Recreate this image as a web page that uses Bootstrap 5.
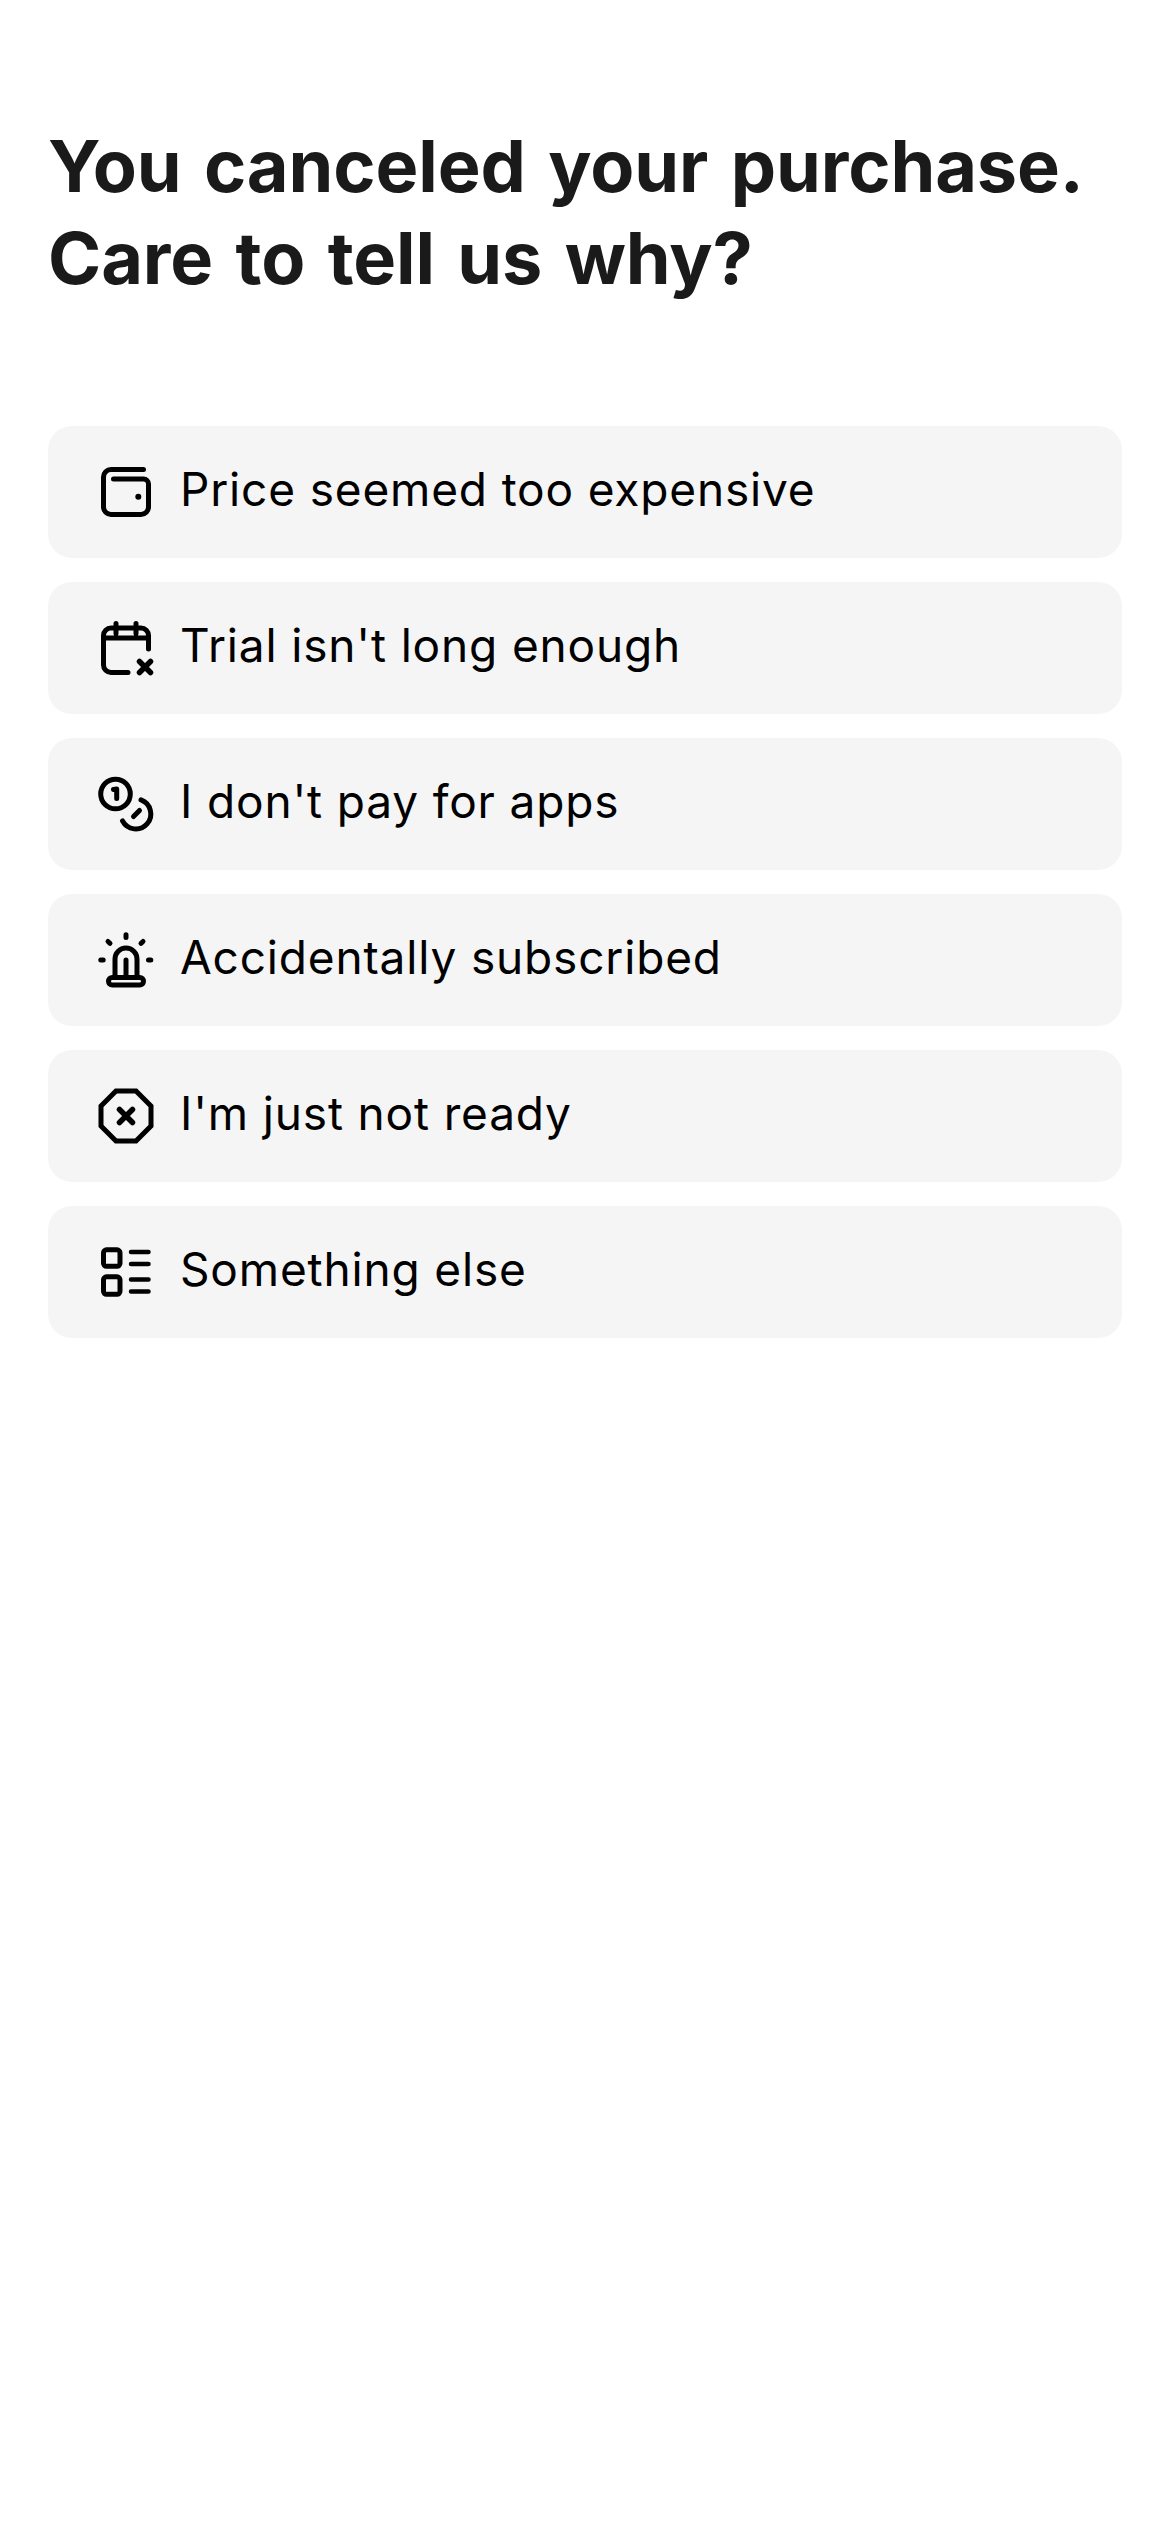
<!DOCTYPE html>
<html lang="en">
<head>
    <meta charset="UTF-8">
    <meta name="viewport" content="width=device-width, initial-scale=1.0">
    <title>Cancel survey</title>
    <link href="https://cdn.jsdelivr.net/npm/bootstrap@5.3.3/dist/css/bootstrap.min.css" rel="stylesheet">
    <style>
        body {
            font-family: Inter, "Liberation Sans", sans-serif;
            background-color: #fff;
        }
        .survey-page {
            padding: 120px 48px 0;
        }
        .survey-title {
            font-size: 72px;
            font-weight: 700;
            line-height: 92px;
            letter-spacing: -0.1px;
            word-spacing: 5.5px;
            color: #1a1a1a;
            margin-bottom: 122px;
        }
        .reason-list {
            gap: 24px;
        }
        .reason-item {
            height: 132px;
            padding: 0 48px;
            gap: 24px;
            background-color: #f5f5f5;
            border: 0;
            border-radius: 24px;
            font-size: 46px;
            color: #000;
            letter-spacing: 0.84px;
        }
        .reason-label {
            padding-bottom: 6px;
        }
        .reason-icon {
            width: 60px;
            height: 60px;
            flex-shrink: 0;
            fill: none;
            stroke: #000;
            stroke-width: 5;
            stroke-linecap: round;
            stroke-linejoin: round;
        }
        .icon-dot {
            fill: #000;
            stroke: none;
        }
    </style>
</head>
<body>
<div class="survey-page">
    <h1 class="survey-title">You canceled your purchase.<br>Care to tell us why?</h1>

    <!-- reasons -->
    <div class="reason-list d-flex flex-column">
        <button type="button" class="reason-item d-flex align-items-center w-100 text-start">
            <svg class="reason-icon" viewBox="0 0 60 60">
                <path d="M47.5 7.5H15A7.5 7.5 0 0 0 7.5 15V45A7.5 7.5 0 0 0 15 52.5H45A7.5 7.5 0 0 0 52.5 45V22A5 5 0 0 0 47.5 17H17.5"/>
                <circle class="icon-dot" cx="42.3" cy="34.7" r="3"/>
            </svg>
            <span class="reason-label">Price seemed too expensive</span>
        </button>
        <button type="button" class="reason-item d-flex align-items-center w-100 text-start">
            <svg class="reason-icon" viewBox="0 0 60 60">
                <path d="M32 54.5H15A7.5 7.5 0 0 1 7.5 47V17.5A7.5 7.5 0 0 1 15 10H45A7.5 7.5 0 0 1 52.5 17.5V31"/>
                <path d="M7.5 20H52.5M20 5.5V15.5M40 5.5V15.5"/>
                <path stroke-width="5.5" d="M43.5 43.5L54.5 54.5M54.5 43.5L43.5 54.5"/>
            </svg>
            <span class="reason-label">Trial isn't long enough</span>
        </button>
        <button type="button" class="reason-item d-flex align-items-center w-100 text-start">
            <svg class="reason-icon" viewBox="0 0 60 60">
                <circle cx="19.5" cy="20" r="14.8"/>
                <path d="M17.5 15.5L20.7 15V24.5"/>
                <path d="M45 25.9A15 15 0 1 1 26.5 46.9"/>
                <path d="M43.5 36.5L37.5 42.5"/>
            </svg>
            <span class="reason-label">I don't pay for apps</span>
        </button>
        <button type="button" class="reason-item d-flex align-items-center w-100 text-start">
            <svg class="reason-icon" viewBox="0 0 60 60">
                <path d="M30 4.8V7.5M12 11.5L14 13.3M47 11.5L45 13.3M4.8 30H7.2M52.5 30H54.8"/>
                <path d="M19 45V29A11 11 0 0 1 41 29V45M30 30V45"/>
                <rect x="12.5" y="47.5" width="35" height="7.5" rx="3.75"/>
            </svg>
            <span class="reason-label">Accidentally subscribed</span>
        </button>
        <button type="button" class="reason-item d-flex align-items-center w-100 text-start">
            <svg class="reason-icon" viewBox="0 0 60 60">
                <polygon stroke-linejoin="miter" points="20,5 40,5 55,20 55,40 40,55 20,55 5,40 5,20"/>
                <path stroke-width="5.5" d="M23.5 23.5L36.5 36.5M36.5 23.5L23.5 36.5"/>
            </svg>
            <span class="reason-label">I'm just not ready</span>
        </button>
        <button type="button" class="reason-item d-flex align-items-center w-100 text-start">
            <svg class="reason-icon" viewBox="0 0 60 60">
                <rect x="7.5" y="7.8" width="16.5" height="16.5" rx="3"/>
                <rect x="7.5" y="34.8" width="16.5" height="17.5" rx="3"/>
                <path stroke-width="4.5" d="M35 10H52.5M35 22H52.5M35 37.5H52.5M35 49.5H52.5"/>
            </svg>
            <span class="reason-label">Something else</span>
        </button>
    </div>
</div>

<script src="https://cdn.jsdelivr.net/npm/bootstrap@5.3.3/dist/js/bootstrap.bundle.min.js"></script>
</body>
</html>
